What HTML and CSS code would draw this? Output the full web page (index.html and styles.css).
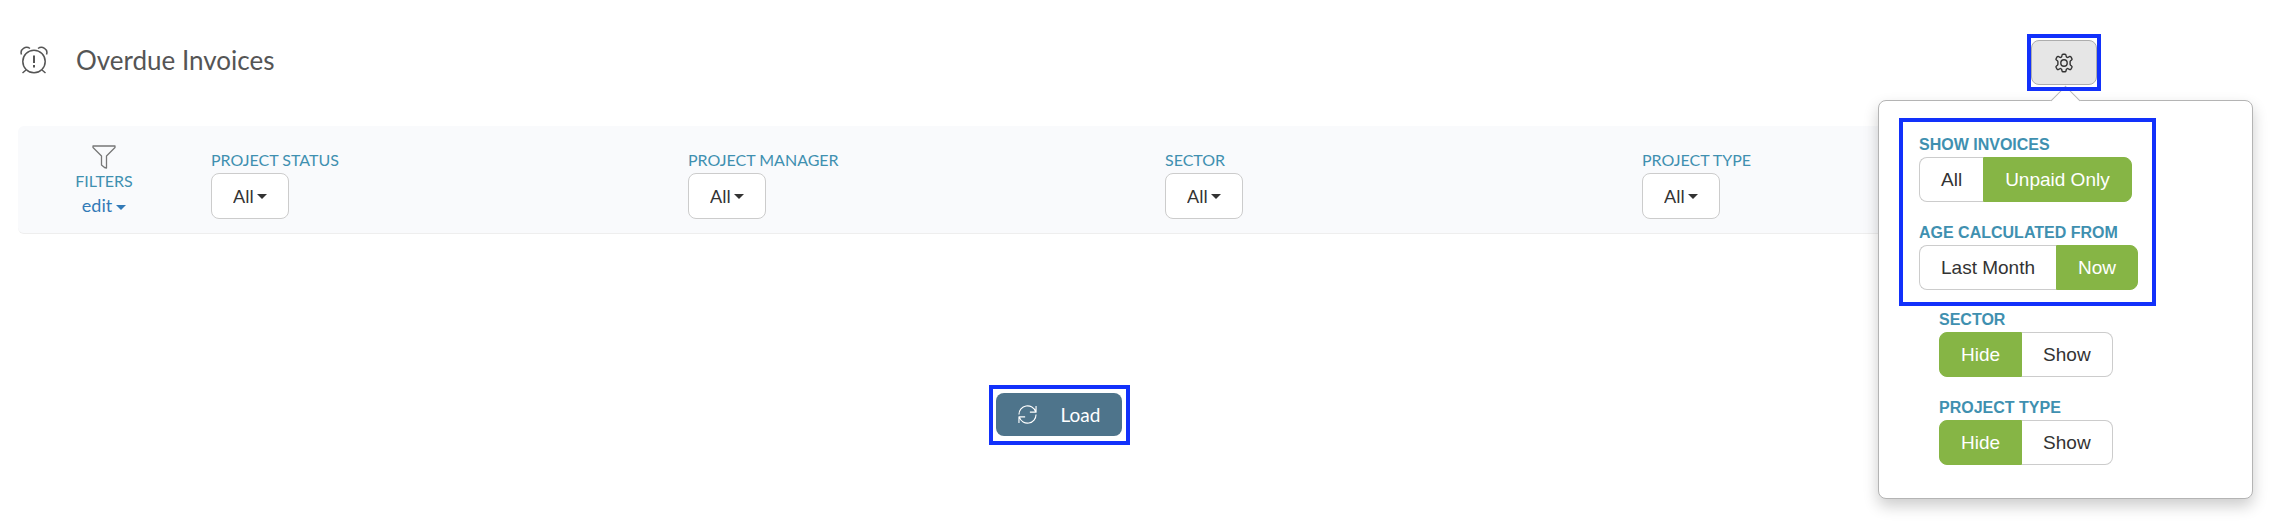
FILE: index.html
```html
<!DOCTYPE html>
<html lang="en">
<head>
    <meta charset="UTF-8">
    <meta name="viewport" content="width=device-width, initial-scale=1.0">
    <title>Overdue Invoices</title>
    <link rel="stylesheet" href="styles.css">
</head>
<body>
    <div class="page">
        <header class="page-header">
            <div class="page-title">
                <svg class="alarm-icon" viewBox="0 0 28 28" aria-hidden="true">
                    <circle cx="14" cy="15.5" r="11.2"/>
                    <path d="M1.500 8.500C-.5 3 6-.5 10 2.500M26.500 8.500C28.500 3 22-.5 18 2.500M6 24l-3.500 3M22 24l3.500 3"/>
                    <path class="mark" d="M14 9.500V17M14 19v2.500"/>
                </svg>
                <h1>Overdue Invoices</h1>
            </div>

            <div class="settings">
                <div class="settings-frame highlight">
                    <button class="settings-btn" type="button" aria-label="Settings" aria-expanded="true">
                        <svg viewBox="0 0 20 20" aria-hidden="true">
                            <path d="M8 2.200Q8.200 1.200 9 1.200h2q.8 0 1 1l.3 1.300q.2.800 1 .9.500.2 1.100-.2l1.200-.7q.8-.4 1.300.4l1 1.800q.4.800-.3 1.300l-1 .8q-.6.500-.5 1.200v2q-.1.700.5 1.200l1 .8q.7.500.3 1.300l-1 1.800q-.5.800-1.300.4l-1.200-.7q-.6-.4-1.100-.2-.8.100-1 .9l-.3 1.300q-.2 1-1 1H9q-.8 0-1-1l-.3-1.300q-.2-.8-1-.9-.5-.2-1.100.2l-1.200.7q-.8.400-1.300-.4l-1-1.800q-.4-.8.300-1.300l1-.8q.6-.5.500-1.200V9q.1-.7-.5-1.200l-1-.8q-.7-.5-.3-1.300l1-1.800q.5-.8 1.300-.4l1.200.7q.6.400 1.100.2.800-.1 1-.9z"/>
                            <circle cx="10" cy="10" r="3.200"/>
                        </svg>
                    </button>
                </div>

                <!-- Settings popover -->
                <div class="popover">
                    <div class="option-box highlight">
                        <div class="option" role="radiogroup" aria-labelledby="invoicesLabel">
                            <div class="label" id="invoicesLabel">SHOW INVOICES</div>
                            <div class="toggle">
                                <input type="radio" name="invoices" id="invoicesAll">
                                <label for="invoicesAll">All</label>
                                <input type="radio" name="invoices" id="invoicesUnpaid" checked>
                                <label for="invoicesUnpaid">Unpaid Only</label>
                            </div>
                        </div>
                        <div class="option" role="radiogroup" aria-labelledby="ageLabel">
                            <div class="label" id="ageLabel">AGE CALCULATED FROM</div>
                            <div class="toggle">
                                <input type="radio" name="age" id="ageMonth">
                                <label for="ageMonth">Last Month</label>
                                <input type="radio" name="age" id="ageNow" checked>
                                <label for="ageNow">Now</label>
                            </div>
                        </div>
                    </div>
                    <div class="option-list">
                        <div class="option" role="radiogroup" aria-labelledby="sectorLabel">
                            <div class="label" id="sectorLabel">SECTOR</div>
                            <div class="toggle">
                                <input type="radio" name="sector" id="sectorHide" checked>
                                <label for="sectorHide">Hide</label>
                                <input type="radio" name="sector" id="sectorShow">
                                <label for="sectorShow">Show</label>
                            </div>
                        </div>
                        <div class="option" role="radiogroup" aria-labelledby="typeLabel">
                            <div class="label" id="typeLabel">PROJECT TYPE</div>
                            <div class="toggle">
                                <input type="radio" name="type" id="typeHide" checked>
                                <label for="typeHide">Hide</label>
                                <input type="radio" name="type" id="typeShow">
                                <label for="typeShow">Show</label>
                            </div>
                        </div>
                    </div>
                </div>
            </div>
        </header>

        <section class="filters">
            <div class="filters-menu">
                <svg class="filter-icon" viewBox="0 0 24 24" aria-hidden="true">
                    <path d="M1 1h22v1.500L14.500 11v12L12.500 22.500 9.500 20V11L1 2.500z"/>
                </svg>
                <div class="label">FILTERS</div>
                <button class="edit-btn caret" type="button">edit</button>
            </div>
            <div class="filter">
                <label class="label" for="projectStatus">PROJECT STATUS</label>
                <div class="select caret"><select id="projectStatus"><option>All</option></select></div>
            </div>
            <div class="filter">
                <label class="label" for="projectManager">PROJECT MANAGER</label>
                <div class="select caret"><select id="projectManager"><option>All</option></select></div>
            </div>
            <div class="filter">
                <label class="label" for="sector">SECTOR</label>
                <div class="select caret"><select id="sector"><option>All</option></select></div>
            </div>
            <div class="filter">
                <label class="label" for="projectType">PROJECT TYPE</label>
                <div class="select caret"><select id="projectType"><option>All</option></select></div>
            </div>
        </section>

        <main class="content">
            <div class="load highlight">
                <button class="load-btn" type="button">
                    <svg viewBox="0 0 20 20" aria-hidden="true">
                        <path d="M1 10a9 9 0 0 1 17.500-3M19 10a9 9 0 0 1-17.500 3M19 1v6.500h-6.500M1 19v-6.500h6.500"/>
                    </svg>
                    Load
                </button>
            </div>
        </main>
    </div>
</body>
</html>
```
FILE: styles.css
```css
* {
    box-sizing: border-box;
    margin: 0;
    padding: 0;
}

body {
    font-family: Lato, "Liberation Sans", sans-serif;
    font-size: 18px;
    color: #333;
    background: #fff;
}

button, select {
    font: inherit;
    color: inherit;
    cursor: pointer;
}

svg {
    display: block;
    fill: none;
    stroke: currentColor;
    stroke-linejoin: round;
}

.page {
    min-height: 100vh;
    padding: 34px 173px 0 18px;
}

.highlight {
    border: 4px solid #1231fb;
}

.label {
    display: block;
    font-size: 16px;
    line-height: 20px;
    color: #3f90b0;
}

/* Header */
.page-header {
    display: flex;
    align-items: flex-start;
    justify-content: space-between;
}

.page-title {
    display: flex;
    align-items: center;
    height: 51px;
    color: #555;
}

.alarm-icon {
    width: 28px;
    height: 28px;
    margin: 0 28px 0 2px;
    stroke-width: 1.5;
}

.alarm-icon .mark {
    stroke-width: 2;
}

h1 {
    font-size: 26px;
    font-weight: 400;
    line-height: 32px;
}

.settings {
    position: relative;
}

.settings-frame {
    position: relative;
    z-index: 11;
    padding: 2px 0;
}

.settings-btn {
    display: flex;
    align-items: center;
    justify-content: center;
    width: 66px;
    height: 45px;
    background: #e6e6e6;
    border: 1px solid #adadad;
    border-radius: 8px;
}

.settings-btn svg {
    width: 20px;
    height: 20px;
    stroke-width: 1.4;
}

/* Popover */
.popover {
    position: absolute;
    top: 66px;
    right: -152px;
    z-index: 10;
    width: 375px;
    padding: 17px 20px 33px;
    font-family: "Liberation Sans", Arial, sans-serif;
    font-size: 19px;
    background: #fff;
    border: 1px solid #b4b4b4;
    border-radius: 8px;
    box-shadow: 0 7px 15px rgba(0, 0, 0, 0.2);
}

.popover::before {
    content: "";
    position: absolute;
    top: -11px;
    left: 176px;
    width: 20px;
    height: 20px;
    background: #fff;
    border: 1px solid #b4b4b4;
    border-width: 1px 0 0 1px;
    transform: rotate(45deg);
}

.popover .label {
    margin-bottom: 2px;
    font-weight: 700;
}

.option-box {
    width: 257px;
    padding: 13px 12px 12px 16px;
}

.option-list {
    padding: 4px 40px 0;
}

.option + .option {
    margin-top: 21px;
}

.toggle {
    display: flex;
}

.toggle input {
    position: absolute;
    opacity: 0;
}

.toggle label {
    padding: 0 21px;
    line-height: 43px;
    white-space: nowrap;
    border: 1px solid #ccc;
    cursor: pointer;
}

.toggle label:first-of-type {
    border-radius: 8px 0 0 8px;
}

.toggle label:last-of-type {
    border-radius: 0 8px 8px 0;
}

.toggle label:first-of-type:not(input:checked + label) {
    border-right: 0;
}

.toggle label:last-of-type:not(input:checked + label) {
    border-left: 0;
}

.toggle input:checked + label {
    color: #fff;
    background: #86b545;
    border-color: #86b545;
}

/* Filters */
.filters {
    display: grid;
    grid-template-columns: 193px repeat(4, 1fr);
    margin: 35px -18px 0 0;
    padding: 19px 0 14px;
    background: #f9fafc;
    border-bottom: 1px solid #eee;
    border-radius: 6px;
}

.filters-menu {
    display: flex;
    flex-direction: column;
    align-items: center;
    padding-right: 21px;
}

.filter-icon {
    width: 24px;
    height: 24px;
    margin-bottom: 2px;
    color: #777;
    stroke-width: 1.3;
}

.edit-btn {
    line-height: 28px;
    color: #337ab7;
    background: none;
    border: 0;
}

.caret::after {
    content: "";
    display: inline-block;
    margin-left: 4px;
    vertical-align: middle;
    border: 5px solid transparent;
    border-top-color: currentColor;
    border-bottom: 0;
}

.filter {
    padding-top: 5px;
}

.select {
    display: inline-block;
    position: relative;
    margin-top: 3px;
}

.select::after {
    position: absolute;
    top: 21px;
    right: 22px;
    pointer-events: none;
}

.select select {
    appearance: none;
    display: block;
    height: 46px;
    padding: 0 34px 0 21px;
    background: #fff;
    border: 1px solid #ccc;
    border-radius: 8px;
}

/* Content */
.content {
    display: flex;
    justify-content: center;
    padding-top: 151px;
}

.load {
    padding: 4px 4px 5px 3px;
}

.load-btn {
    display: flex;
    align-items: center;
    gap: 24px;
    height: 43px;
    padding: 0 22px;
    font-size: 19px;
    color: #fff;
    background: #4e748b;
    border: 0;
    border-radius: 8px;
}

.load-btn svg {
    width: 19px;
    height: 19px;
    stroke-width: 1.2;
}
```
